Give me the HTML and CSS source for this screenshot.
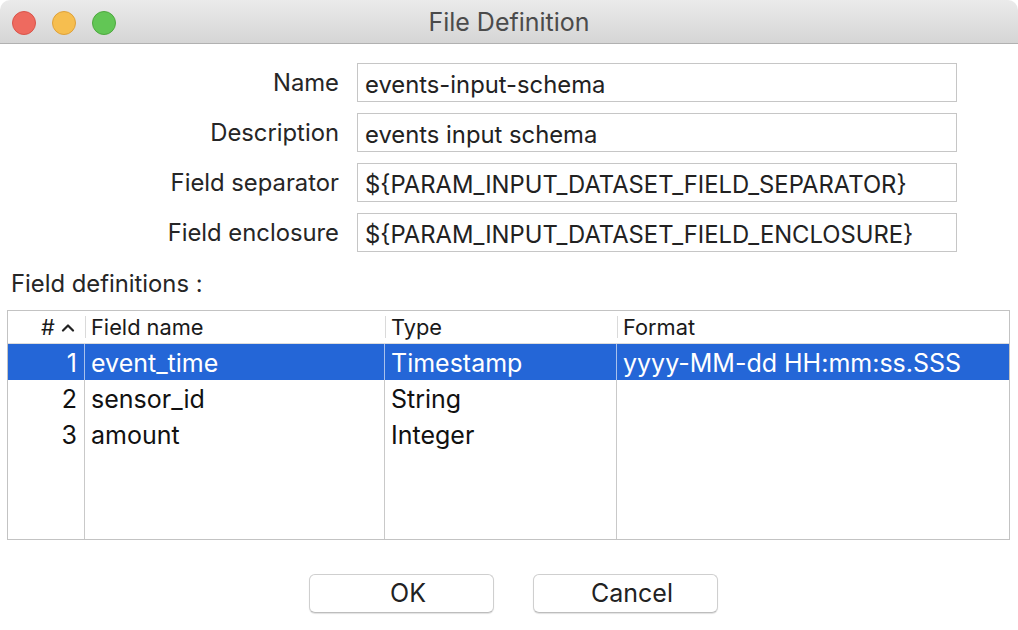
FILE: index.html
```html
<!DOCTYPE html>
<html>
<head>
<meta charset="utf-8">
<link rel="stylesheet" href="styles.css">
</head>
<body>
<div class="window">
  <div class="titlebar">
    <div class="lights">
      <span class="light red"></span>
      <span class="light yellow"></span>
      <span class="light green"></span>
    </div>
    <div class="title">File Definition</div>
  </div>
  <div class="content">
    <div class="form">
      <label class="lbl">Name</label>
      <div class="input">events-input-schema</div>
      <label class="lbl">Description</label>
      <div class="input">events input schema</div>
      <label class="lbl">Field separator</label>
      <div class="input">${PARAM_INPUT_DATASET_FIELD_SEPARATOR}</div>
      <label class="lbl">Field enclosure</label>
      <div class="input">${PARAM_INPUT_DATASET_FIELD_ENCLOSURE}</div>
    </div>
    <div class="section-label">Field definitions :</div>
    <div class="table">
      <div class="row head">
        <div class="cell num"># <svg class="chev" width="14" height="9" viewBox="0 0 14 9"><path d="M2 7.5 L7 2.5 L12 7.5" fill="none" stroke="#222" stroke-width="2.2" stroke-linecap="round" stroke-linejoin="round"/></svg></div>
        <div class="cell">Field name</div>
        <div class="cell">Type</div>
        <div class="cell last">Format</div>
      </div>
      <div class="row sel">
        <div class="cell num">1</div>
        <div class="cell">event_time</div>
        <div class="cell">Timestamp</div>
        <div class="cell last">yyyy-MM-dd HH:mm:ss.SSS</div>
      </div>
      <div class="row">
        <div class="cell num">2</div>
        <div class="cell">sensor_id</div>
        <div class="cell">String</div>
        <div class="cell last"></div>
      </div>
      <div class="row">
        <div class="cell num">3</div>
        <div class="cell">amount</div>
        <div class="cell">Integer</div>
        <div class="cell last"></div>
      </div>
      <div class="row filler">
        <div class="cell"></div>
        <div class="cell"></div>
        <div class="cell"></div>
        <div class="cell last"></div>
      </div>
    </div>
    <div class="buttons">
      <button class="btn">OK</button>
      <button class="btn">Cancel</button>
    </div>
  </div>
</div>
</body>
</html>
```

FILE: styles.css
```css
* { box-sizing: border-box; }
html, body { margin: 0; padding: 0; background: #ffffff; }
body {
  font-family: Inter, "Noto Sans", "Liberation Sans", sans-serif;
  color: #222;
}
.window {
  width: 1018px;
  height: 630px;
  background: #fff;
  display: flex;
  flex-direction: column;
  border-top-right-radius: 10px;
  border-top-left-radius: 10px;
  overflow: hidden;
}
.titlebar {
  height: 44px;
  flex: 0 0 44px;
  background: linear-gradient(#ebebeb, #d5d5d5);
  border-bottom: 1px solid #b1b1b1;
  position: relative;
  display: flex;
  align-items: center;
  justify-content: center;
}
.lights {
  position: absolute;
  left: 12px;
  top: 11px;
  display: flex;
  gap: 16px;
}
.light {
  width: 24px;
  height: 24px;
  border-radius: 50%;
  display: block;
}
.red { background: #ee6a5f; border: 1px solid #d9544a; }
.yellow { background: #f6be4f; border: 1px solid #dea13a; }
.green { background: #62c655; border: 1px solid #4ea83f; }
.title {
  font-size: 25px;
  color: #4b4b4b;
  margin-top: 1px;
}
.content {
  flex: 1;
  display: flex;
  flex-direction: column;
  padding: 19px 8px 0 7px;
}
.form {
  display: grid;
  grid-template-columns: 332px 600px;
  column-gap: 18px;
  row-gap: 11px;
  align-items: center;
}
.lbl {
  text-align: right;
  font-size: 23.8px;
  color: #262626;
}
.input {
  height: 39px;
  border: 1px solid #c6c6c6;
  padding: 0 7px;
  font-size: 23.8px;
  line-height: 42px;
  color: #222;
  white-space: nowrap;
}
.section-label {
  font-size: 23.8px;
  color: #262626;
  margin: 17px 0 0 4px;
  height: 41px;
}
.table {
  height: 230px;
  border: 1px solid #c3c3c3;
  display: flex;
  flex-direction: column;
}
.row {
  display: grid;
  grid-template-columns: 77px 300px 232px 1fr;
  height: 36px;
}
.row .cell {
  border-right: 1px solid #c9c9c9;
  padding: 0 6px;
  font-size: 25px;
  line-height: 38px;
  color: #111;
  white-space: nowrap;
  overflow: hidden;
}
.row .cell.last { border-right: none; }
.row .cell.num { text-align: right; padding-right: 7px; }
.row.head {
  height: 33px;
  border-bottom: 1px solid #dcdcdc;
}
.row.head .cell {
  font-size: 21.8px;
  line-height: 33px;
  border-right: none;
  position: relative;
  color: #1a1a1a;
}
.row.head .cell + .cell::before {
  content: "";
  position: absolute;
  left: 0;
  top: 5px;
  bottom: 5px;
  width: 1px;
  background: #dadada;
}
.row.head .cell.num { padding-right: 10px; }
.chev { vertical-align: 3px; margin-left: 0; }
.row.sel { background: #2466d7; }
.row.sel .cell {
  color: #fff;
  border-right-color: #a9c1ec;
}
.row.filler { flex: 1; height: auto; }
.buttons {
  display: flex;
  justify-content: center;
  gap: 39px;
  padding-left: 9px;
  margin-top: 34px;
}
.btn {
  width: 185px;
  height: 39px;
  background: #fff;
  border: 1px solid #cfcfcf;
  border-bottom-color: #bdbdbd;
  border-radius: 6px;
  box-shadow: 0 1px 1px rgba(0,0,0,0.12);
  font-family: Inter, "Noto Sans", "Liberation Sans", sans-serif;
  font-size: 25px;
  line-height: 37px;
  color: #222;
  padding: 0 0 0 14px;
}
```
